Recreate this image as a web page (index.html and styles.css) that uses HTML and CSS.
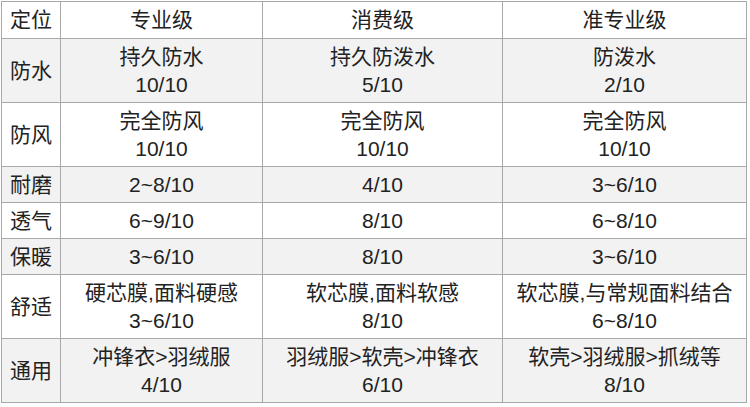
FILE: index.html
```html
<!DOCTYPE html>
<html lang="zh-CN">
<head>
<meta charset="utf-8">
<link rel="stylesheet" href="styles.css">
</head>
<body>
<table class="cmp">
  <colgroup>
    <col class="c-label">
    <col class="c-pro">
    <col class="c-con">
    <col class="c-semi">
  </colgroup>
  <tr class="head">
    <td class="label">定位</td><td>专业级</td><td>消费级</td><td>准专业级</td>
  </tr>
  <tr class="alt">
    <td class="label">防水</td><td>持久防水<br>10/10</td><td>持久防泼水<br>5/10</td><td>防泼水<br>2/10</td>
  </tr>
  <tr>
    <td class="label">防风</td><td>完全防风<br>10/10</td><td>完全防风<br>10/10</td><td>完全防风<br>10/10</td>
  </tr>
  <tr class="alt">
    <td class="label">耐磨</td><td>2~8/10</td><td>4/10</td><td>3~6/10</td>
  </tr>
  <tr>
    <td class="label">透气</td><td>6~9/10</td><td>8/10</td><td>6~8/10</td>
  </tr>
  <tr class="alt">
    <td class="label">保暖</td><td>3~6/10</td><td>8/10</td><td>3~6/10</td>
  </tr>
  <tr>
    <td class="label">舒适</td><td>硬芯膜,面料硬感<br>3~6/10</td><td>软芯膜,面料软感<br>8/10</td><td>软芯膜,与常规面料结合<br>6~8/10</td>
  </tr>
  <tr class="alt">
    <td class="label">通用</td><td>冲锋衣&gt;羽绒服<br>4/10</td><td>羽绒服&gt;软壳&gt;冲锋衣<br>6/10</td><td>软壳&gt;羽绒服&gt;抓绒等<br>8/10</td>
  </tr>
</table>
</body>
</html>
```
FILE: styles.css
```css
html, body {
  margin: 0;
  padding: 0;
  background: #ffffff;
}
body {
  padding: 1px 0 0 1px;
}
.cmp {
  border-collapse: collapse;
  table-layout: fixed;
  width: 745px;
  font-family: "Liberation Sans", "Noto Sans CJK SC", sans-serif;
  font-size: 21px;
  line-height: 28px;
  color: #222222;
}
.c-label { width: 59px; }
.c-pro { width: 202px; }
.c-con { width: 240px; }
.c-semi { width: 244px; }
.cmp td {
  border: 1px solid #a8a8a8;
  padding: 4px 0 3px;
  text-align: center;
  vertical-align: middle;
  white-space: nowrap;
}
.cmp .head td {
  padding-bottom: 4px;
}
.cmp td.label {
  text-align: left;
  padding-left: 8px;
}
.alt td {
  background: #f2f2f2;
}
```
